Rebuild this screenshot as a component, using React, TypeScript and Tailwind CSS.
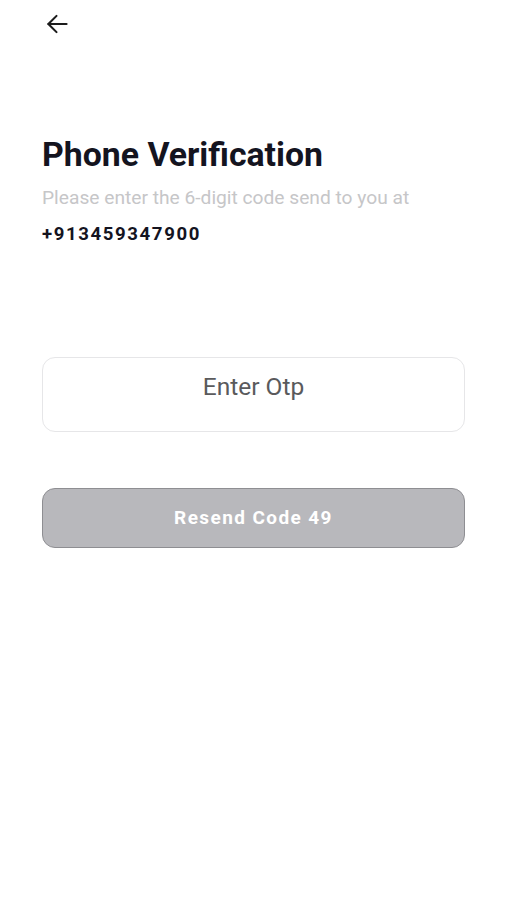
import { useState } from 'react'

export default function App() {
  const [otp, setOtp] = useState('')

  return (
    <div className="min-h-[900px] bg-white px-[42px] pt-[14px] font-['Roboto',sans-serif]">
      <button className="ml-[4px] flex h-[20px] w-[24px] items-center text-[#1c1c1c]">
        <svg width="22" height="20" viewBox="0 0 23 20" fill="none" stroke="currentColor" strokeWidth="2.2" strokeLinecap="round" strokeLinejoin="round">
          <path d="M21.5 10H2.5" />
          <path d="M11 1.5 2.5 10 11 18.5" />
        </svg>
      </button>

      <h1 className="mt-[101px] text-[33.8px] font-bold leading-[40px] text-[#14141f]">Phone Verification</h1>
      <p className="mt-[10px] text-[19.2px] leading-[26px] text-[#c6c6c8]">Please enter the 6-digit code send to you at</p>
      <p className="mt-[11px] text-[18.6px] font-bold leading-[24px] tracking-[1.6px] text-[#14141f]">+913459347900</p>

      <div className="mt-[111px] h-[75px] rounded-[13px] border border-[#e6e6e8] px-4 pt-[13px]">
        <input
          value={otp}
          onChange={(e) => setOtp(e.target.value)}
          placeholder="Enter Otp"
          className="w-full bg-transparent text-center text-[24.5px] leading-[32px] text-[#555] caret-[#2196f3] outline-none placeholder:text-[#5a5a5c]"
        />
      </div>

      <button className="mt-[56px] flex h-[60px] w-full items-center justify-center rounded-[13px] border border-[#8e8e92] bg-[#b8b8bc] text-[19px] font-bold tracking-[1.4px] text-white">
        Resend Code 49
      </button>
    </div>
  )
}
